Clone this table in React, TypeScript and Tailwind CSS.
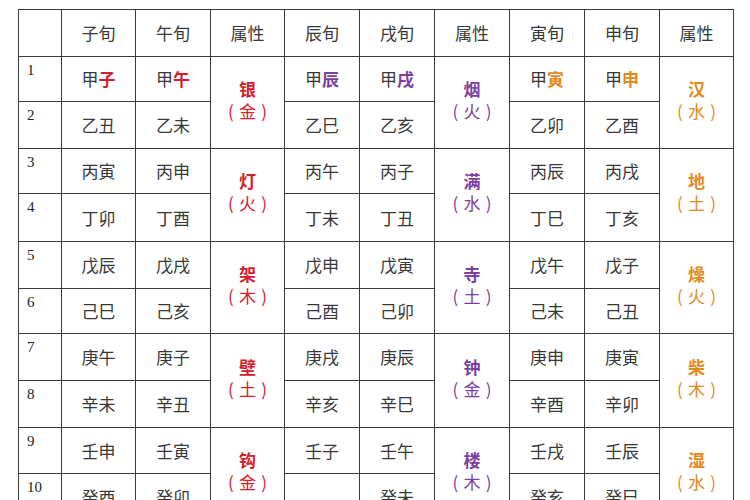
import React from 'react';

const RED = 'text-[#d3202e]';
const PURPLE = 'text-[#7d3f9f]';
const ORANGE = 'text-[#e38a1c]';

const heights = ['h-[45px]', 'h-[47px]', 'h-[45px]', 'h-[48px]', 'h-[47px]', 'h-[45px]', 'h-[47px]', 'h-[47px]', 'h-[46px]', 'h-[46px]'];

const rows: string[][] = [
  ['甲子', '甲午', '甲辰', '甲戌', '甲寅', '甲申'],
  ['乙丑', '乙未', '乙巳', '乙亥', '乙卯', '乙酉'],
  ['丙寅', '丙申', '丙午', '丙子', '丙辰', '丙戌'],
  ['丁卯', '丁酉', '丁未', '丁丑', '丁巳', '丁亥'],
  ['戊辰', '戊戌', '戊申', '戊寅', '戊午', '戊子'],
  ['己巳', '己亥', '己酉', '己卯', '己未', '己丑'],
  ['庚午', '庚子', '庚戌', '庚辰', '庚申', '庚寅'],
  ['辛未', '辛丑', '辛亥', '辛巳', '辛酉', '辛卯'],
  ['壬申', '壬寅', '壬子', '壬午', '壬戌', '壬辰'],
  ['癸酉', '癸卯', '', '癸未', '癸亥', '癸巳'],
];

const attrs: [string, string][][] = [
  [['银', '金'], ['灯', '火'], ['架', '木'], ['壁', '土'], ['钩', '金']],
  [['烟', '火'], ['满', '水'], ['寺', '土'], ['钟', '金'], ['楼', '木']],
  [['汉', '水'], ['地', '土'], ['燥', '火'], ['柴', '木'], ['湿', '水']],
];
const attrColors = [RED, PURPLE, ORANGE];

const cell = 'border border-[#3a3a3a] text-center align-middle';

function Pair({ text, group, first }: { text: string; group: number; first: boolean }) {
  if (!first || !text) return <>{text}</>;
  return (
    <>
      {text[0]}
      <span className={`${attrColors[group]} font-bold`}>{text[1]}</span>
    </>
  );
}

export default function App() {
  return (
    <div
      className="w-[750px] h-[500px] overflow-hidden bg-white pl-[18px] pt-[9px] text-[#383838]"
      style={{ fontFamily: '"Noto Sans CJK SC", "Noto Sans", sans-serif' }}
    >
      <table className="border-collapse table-fixed w-[715px] text-[17px]">
        <colgroup>
          <col className="w-[43px]" />
          <col className="w-[74px]" />
          <col className="w-[75px]" />
          <col className="w-[74px]" />
          <col className="w-[75px]" />
          <col className="w-[75px]" />
          <col className="w-[75px]" />
          <col className="w-[75px]" />
          <col className="w-[75px]" />
          <col className="w-[74px]" />
        </colgroup>
        <thead>
          <tr className="h-[47px]">
            {['', '子旬', '午旬', '属性', '辰旬', '戌旬', '属性', '寅旬', '申旬', '属性'].map((h, i) => (
              <th key={i} className={`${cell} font-normal`}>{h}</th>
            ))}
          </tr>
        </thead>
        <tbody>
          {rows.map((r, i) => {
            const even = i % 2 === 0;
            const pairIdx = Math.floor(i / 2);
            return (
              <tr key={i} className={heights[i]}>
                <td className="border border-[#3a3a3a] align-top pl-[8px] pt-[3px] text-[15px] leading-[20px] text-[#222]" style={{ fontFamily: '"Liberation Serif", serif' }}>
                  {i + 1}
                </td>
                {[0, 1, 2].map(g => (
                  <React.Fragment key={g}>
                    <td className={cell}><Pair text={r[g * 2]} group={g} first={i === 0} /></td>
                    <td className={cell}><Pair text={r[g * 2 + 1]} group={g} first={i === 0} /></td>
                    {even && (
                      <td rowSpan={2} className={`${cell} ${attrColors[g]} pb-[6px]`}>
                        <div className="font-bold leading-[22px]">{attrs[g][pairIdx][0]}</div>
                        <div className="leading-[22px] flex justify-center">
                          <span className="inline-block w-[11px] text-left">(</span>
                          <span>{attrs[g][pairIdx][1]}</span>
                          <span className="inline-block w-[11px] text-right">)</span>
                        </div>
                      </td>
                    )}
                  </React.Fragment>
                ))}
              </tr>
            );
          })}
        </tbody>
      </table>
    </div>
  );
}
